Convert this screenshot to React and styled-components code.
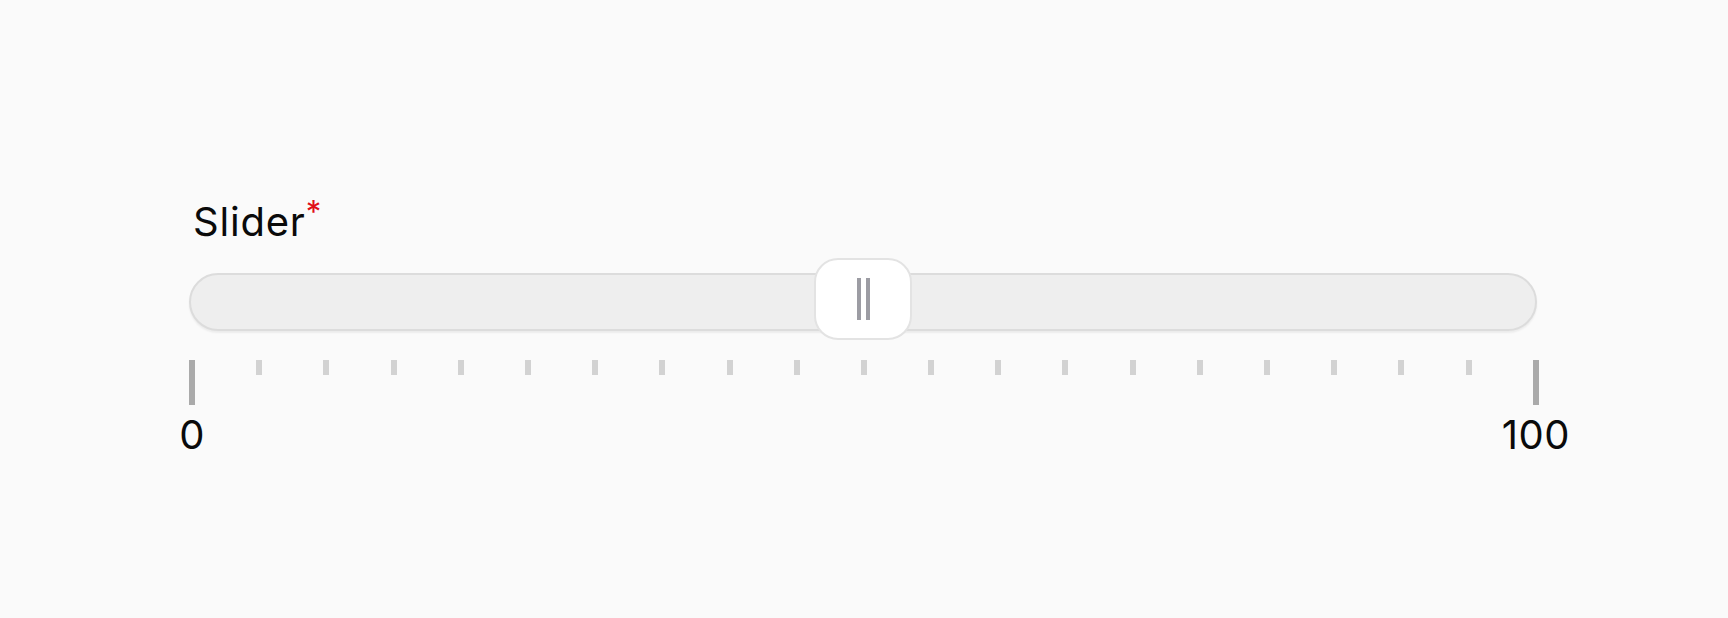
import React from "react";
import styled, { createGlobalStyle } from "styled-components";

const GlobalStyle = createGlobalStyle`
  html, body {
    margin: 0;
    padding: 0;
    background: #fafafa;
    font-family: Inter, "Noto Sans", "Liberation Sans", sans-serif;
    color: #0a0a0a;
  }
`;

const Page = styled.div`
  min-height: 618px;
  box-sizing: border-box;
  padding: 202px 0 0 189px;
`;

const Field = styled.div`
  width: 1350px;
  display: flex;
  flex-direction: column;
`;

const Label = styled.label`
  font-size: 40px;
  line-height: 40px;
  font-weight: 400;
  letter-spacing: 0.8px;
  padding-left: 4px;
  margin-bottom: 31px;
`;

const Required = styled.span`
  color: #e0101a;
  font-size: 31px;
  line-height: 0;
  letter-spacing: 0;
  margin-left: 0;
  vertical-align: 13px;
`;

const Track = styled.div`
  position: relative;
  width: 1348px;
  height: 58px;
  box-sizing: border-box;
  border: 2px solid #dcdcdc;
  border-radius: 29px;
  background: #eeeeee;
  box-shadow: 0 2px 2px rgba(0, 0, 0, 0.06);
`;

const Thumb = styled.div`
  position: absolute;
  top: calc(50% - 3px);
  transform: translate(-50%, -50%);
  width: 98px;
  height: 82px;
  box-sizing: border-box;
  background: #ffffff;
  border: 2px solid #e3e3e3;
  border-radius: 24px;
  display: flex;
  align-items: center;
  justify-content: center;
  gap: 5px;
`;

const Grip = styled.span`
  width: 4px;
  height: 42px;
  background: #9c9ca3;
`;

const Scale = styled.div`
  margin-top: 29px;
  width: 1350px;
  display: flex;
  justify-content: space-between;
  align-items: flex-start;
`;

const Step = styled.div`
  width: 6px;
  display: flex;
  flex-direction: column;
  align-items: center;
`;

const Tick = styled.span`
  width: 6px;
  height: ${(p) => (p.$major ? "45px" : "15px")};
  background: ${(p) => (p.$major ? "#aaaaaa" : "#d2d2d2")};
`;

const StepValue = styled.span`
  margin-top: 10px;
  font-size: 40px;
  line-height: 40px;
  letter-spacing: 0.5px;
  white-space: nowrap;
`;

export default function App() {
  const min = 0;
  const max = 100;
  const value = 50;
  const steps = Array.from({ length: 21 }, (_, i) => i);
  const pct = ((value - min) / (max - min)) * 100;

  return (
    <>
      <GlobalStyle />
      <Page>
        <Field>
          <Label>
            Slider<Required>*</Required>
          </Label>
          <Track>
            <Thumb style={{ left: `${pct}%` }}>
              <Grip />
              <Grip />
            </Thumb>
          </Track>
          <Scale>
            {steps.map((i) => {
              const edge = i === 0 || i === steps.length - 1;
              return (
                <Step key={i}>
                  <Tick $major={edge} />
                  {edge && <StepValue>{i === 0 ? min : max}</StepValue>}
                </Step>
              );
            })}
          </Scale>
        </Field>
      </Page>
    </>
  );
}
